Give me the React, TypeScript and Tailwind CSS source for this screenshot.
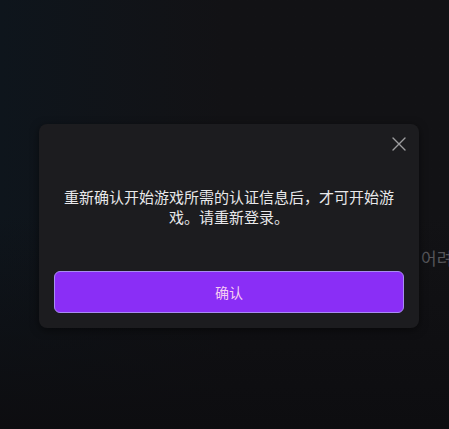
import React from "react";

export default function App() {
  return (
    <div
      className="relative w-[449px] h-[429px] overflow-hidden bg-[#111114]"
      style={{ fontFamily: '"Noto Sans CJK SC", "Noto Sans", sans-serif' }}
    >
      <div className="absolute inset-0 bg-gradient-to-r from-[#0e151c] via-[#121215] to-[#121215]" />
      <div className="absolute inset-0 bg-gradient-to-b from-transparent via-transparent to-[#0d0d10]" />
      <div className="absolute left-[421px] top-[246px] text-[17px] leading-[24px] text-[#55555a] whitespace-nowrap">
        어려
      </div>

      <div className="absolute left-[39px] top-[124px] w-[380px] h-[204px] rounded-[8px] bg-[#1c1c1f] shadow-[0_2px_8px_rgba(0,0,0,0.5)] flex flex-col px-[15px] pb-[15px] pt-[63px]">
        <button className="absolute top-[13px] right-[13px] w-[14px] h-[14px] text-[#9d9d9f]">
          <svg viewBox="0 0 14 14" width="14" height="14" fill="none" stroke="currentColor" strokeWidth="1.4" strokeLinecap="round">
            <path d="M1 1L13 13M13 1L1 13" />
          </svg>
        </button>
        <p className="mx-[7px] text-center text-[15px] leading-[20px] text-[#e8e8ea]">
          重新确认开始游戏所需的认证信息后，才可开始游戏。请重新登录。
        </p>
        <button className="mt-auto h-[42px] w-full rounded-[6px] border border-[#a88cf2] bg-[#8a2ef6] text-[14px] text-[#f6cdf2]">
          确认
        </button>
      </div>
    </div>
  );
}
